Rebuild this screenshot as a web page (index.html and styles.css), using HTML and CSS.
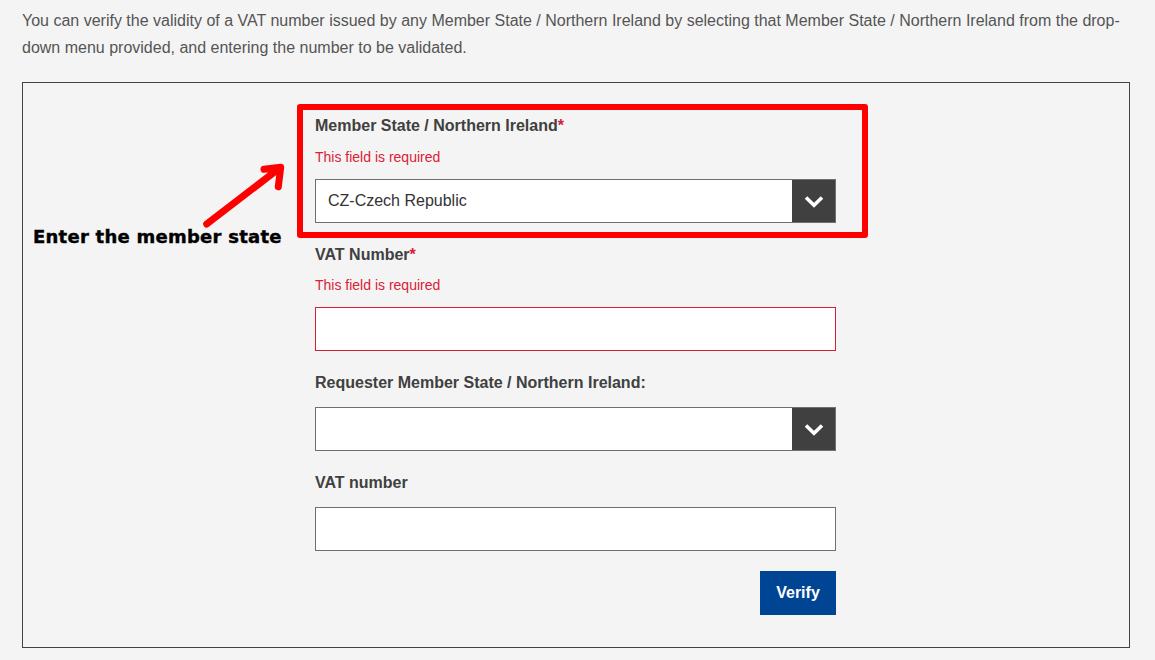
FILE: index.html
```html
<!DOCTYPE html>
<html lang="en">
<head>
<meta charset="utf-8">
<title>VAT number validation</title>
<link rel="stylesheet" href="styles.css">
</head>
<body>
<p class="intro">You can verify the validity of a VAT number issued by any Member State / Northern Ireland by selecting that Member State / Northern Ireland from the drop-down menu provided, and entering the number to be validated.</p>
<div class="box">
  <div class="callout-frame"></div>
  <svg class="callout-arrow" width="100" height="80" viewBox="0 0 100 80">
    <path d="M11.7 69 L85 12.8 M69 14.3 L85.7 12.3 L83.3 31.7" fill="none" stroke="#ff0000" stroke-width="7" stroke-linecap="round" stroke-linejoin="round"/>
  </svg>
  <div class="callout-text">Enter the member state</div>

  <form class="form">
    <div class="field">
      <div class="label has-error">Member State / Northern Ireland<span class="req">*</span></div>
      <div class="error">This field is required</div>
      <div class="select">
        <span class="value">CZ-Czech Republic</span>
        <span class="arrow"><svg width="20" height="13" viewBox="0 0 20 13"><path d="M2 2.5 L10 10.2 L18 2.5" fill="none" stroke="#fff" stroke-width="3.6"/></svg></span>
      </div>
    </div>
    <div class="field">
      <div class="label has-error tight">VAT Number<span class="req">*</span></div>
      <div class="error">This field is required</div>
      <div class="input invalid"></div>
    </div>
    <div class="field">
      <div class="label">Requester Member State / Northern Ireland:</div>
      <div class="select">
        <span class="value"></span>
        <span class="arrow"><svg width="20" height="13" viewBox="0 0 20 13"><path d="M2 2.5 L10 10.2 L18 2.5" fill="none" stroke="#fff" stroke-width="3.6"/></svg></span>
      </div>
    </div>
    <div class="field last">
      <div class="label">VAT number</div>
      <div class="input"></div>
    </div>
    <div class="actions">
      <button type="button" class="verify">Verify</button>
    </div>
  </form>
</div>
</body>
</html>
```
FILE: styles.css
```css
html, body {
  margin: 0;
  padding: 0;
  background: #f4f4f4;
  font-family: Arial, "Liberation Sans", sans-serif;
}

.intro {
  margin: 0;
  padding: 7px 22px 0 22px;
  font-size: 16px;
  line-height: 27px;
  color: #555555;
}

.box {
  position: relative;
  margin: 21px 25px 0 22px;
  border: 1px solid #444444;
  padding: 33px 0 31px 0;
  height: 566px;
  box-sizing: border-box;
}

.callout-frame {
  position: absolute;
  left: 274px;
  top: 21px;
  width: 571px;
  height: 134px;
  box-sizing: border-box;
  border: 6.5px solid #ff0000;
  border-radius: 3px;
}

.callout-arrow {
  position: absolute;
  left: 172px;
  top: 72px;
}

.callout-text {
  position: absolute;
  left: 10px;
  top: 144px;
  font-family: "DejaVu Sans", sans-serif;
  font-weight: bold;
  font-size: 18px;
  line-height: 20px;
  letter-spacing: 0.25px;
  color: #000000;
  -webkit-text-stroke: 0.4px #000000;
  white-space: nowrap;
}

.form {
  width: 521px;
  margin: 0 0 0 292px;
  display: flex;
  flex-direction: column;
}

.field {
  display: flex;
  flex-direction: column;
  margin-bottom: 22px;
}

.field.last {
  margin-bottom: 20px;
}

.label {
  font-size: 16px;
  line-height: 20px;
  font-weight: bold;
  color: #404040;
  margin-bottom: 14px;
}

.label.has-error {
  margin-bottom: 11px;
}

.label.has-error.tight {
  margin-bottom: 10px;
}

.req {
  color: #d4212f;
}

.error {
  font-size: 14px;
  line-height: 20px;
  color: #dc2036;
  margin-bottom: 12px;
}

.select {
  display: flex;
  height: 44px;
  box-sizing: border-box;
  border: 1px solid #707070;
  background: #ffffff;
}

.select .value {
  flex: 1;
  padding-left: 12px;
  font-size: 16px;
  line-height: 42px;
  color: #333333;
}

.select .arrow {
  width: 43px;
  background: #404040;
  display: flex;
  align-items: center;
  justify-content: center;
}

.input {
  height: 44px;
  box-sizing: border-box;
  border: 1px solid #707070;
  background: #ffffff;
}

.input.invalid {
  border-color: #d4212f;
}

.actions {
  display: flex;
  justify-content: flex-end;
}

.verify {
  width: 76px;
  height: 44px;
  border: none;
  background: #004494;
  color: #ffffff;
  font-family: Arial, "Liberation Sans", sans-serif;
  font-size: 16px;
  font-weight: bold;
  padding: 0;
  cursor: pointer;
}
```
